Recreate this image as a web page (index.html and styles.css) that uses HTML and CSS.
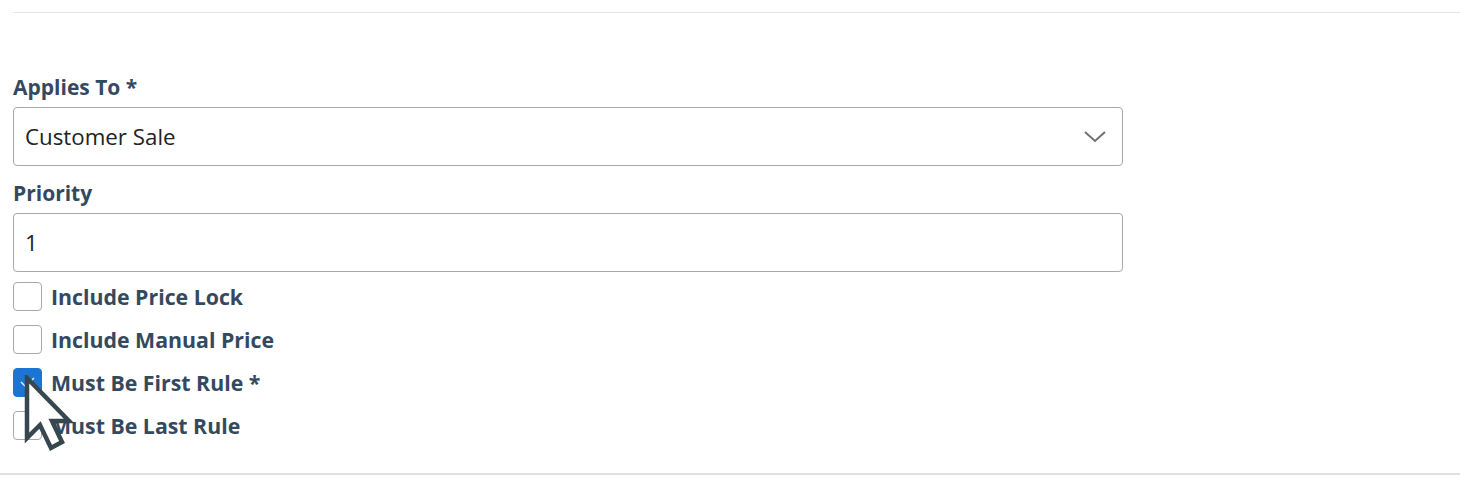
FILE: index.html
```html
<!DOCTYPE html>
<html>
<head>
<meta charset="utf-8">
<link rel="stylesheet" href="styles.css">
</head>
<body>
<div class="page">
  <hr class="top-rule">
  <form class="form">
    <div class="field">
      <label class="label">Applies To *</label>
      <div class="select">
        <span>Customer Sale</span>
        <svg class="chev" width="22" height="12" viewBox="0 0 22 12"><path d="M1 1 L11 10 L21 1" fill="none" stroke="#707070" stroke-width="2"/></svg>
      </div>
    </div>
    <div class="field">
      <label class="label">Priority</label>
      <div class="input">1</div>
    </div>
    <div class="checks">
      <div class="check"><span class="box"></span><span class="clabel">Include Price Lock</span></div>
      <div class="check"><span class="box"></span><span class="clabel">Include Manual Price</span></div>
      <div class="check"><span class="box checked"><svg width="29" height="29" viewBox="0 0 29 29"><path d="M8 14 L12.5 18.5 L21 10" fill="none" stroke="#e8f1fb" stroke-width="1.4"/></svg></span><span class="clabel">Must Be First Rule *</span></div>
      <div class="check"><span class="box"></span><span class="clabel">Must Be Last Rule</span></div>
    </div>
  </form>
  <hr class="bottom-rule">
  <svg class="cursor" width="52" height="80" viewBox="0 0 52 80"><path d="M3 3 L3 63 L16 50 L27 73 L38 67 L28 46 L45 46 Z" fill="#fff" stroke="#37474f" stroke-width="4.5" stroke-linejoin="miter"/></svg>
</div>
</body>
</html>
```
FILE: styles.css
```css
html, body { margin: 0; background: #fff; }
.page { position: relative; width: 1460px; height: 488px; font-family: "Open Sans", "Noto Sans", sans-serif; color: #34495e; }
.top-rule { margin: 0 0 0 13px; padding: 0; border: 0; border-top: 1px solid #e2e2e2; position: relative; top: 12px; height: 0; }
.form { display: flex; flex-direction: column; padding: 73px 0 0 13px; width: 1110px; }
.field { display: flex; flex-direction: column; }
.label { font-weight: 700; font-size: 21px; line-height: 26px; height: 26px; margin-bottom: 7px; }
.field + .field { margin-top: 14px; }
.select, .input { box-sizing: border-box; height: 59px; border: 1px solid #a9a9a9; border-radius: 4px; display: flex; align-items: center; padding: 0 11px; font-size: 22.3px; color: #222; }
.select { justify-content: space-between; padding-right: 16px; }
.checks { display: flex; flex-direction: column; gap: 14px; margin-top: 10px; }
.check { display: flex; align-items: center; gap: 9px; height: 29px; }
.box { box-sizing: border-box; width: 29px; height: 29px; border: 1px solid #a9a9a9; border-radius: 4px; background: #fff; display: block; }
.box.checked { background: #1a76d2; border-color: #1a76d2; }
.box.checked svg { display: block; margin: -1px; }
.clabel { font-weight: 700; font-size: 21.3px; }
.bottom-rule { position: absolute; left: 0; right: 0; top: 473px; margin: 0; border: 0; border-top: 2px solid #e0e0e0; height: 0; }
.cursor { position: absolute; left: 24px; top: 375px; }
```
